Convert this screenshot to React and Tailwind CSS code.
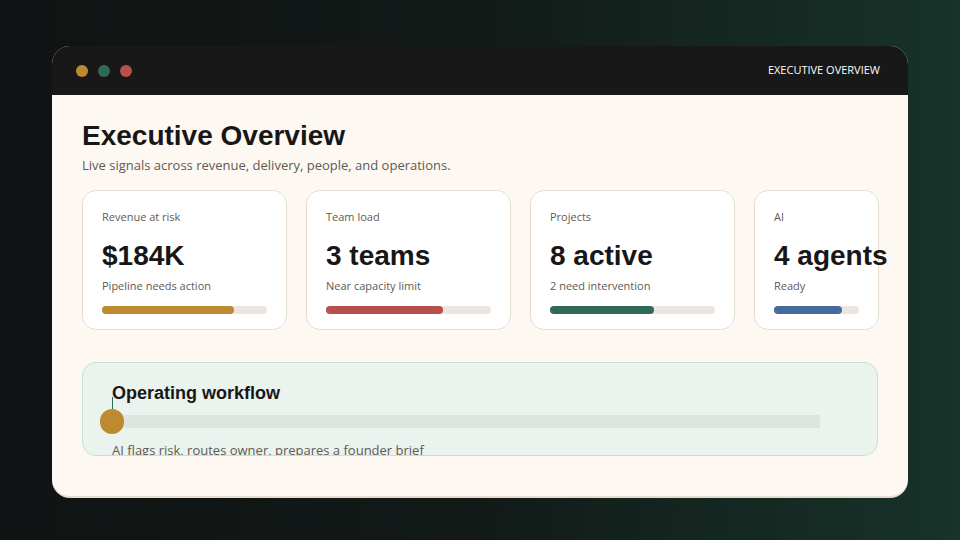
export default function App() {
  const cards = [
    { l: "Revenue at risk", v: "$184K", s: "Pipeline needs action", c: "bg-[#bd8a2f]", w: "w-[205px]", bw: "w-[165px]", f: "w-[132px]" },
    { l: "Team load", v: "3 teams", s: "Near capacity limit", c: "bg-[#b5514a]", w: "w-[205px]", bw: "w-[165px]", f: "w-[117px]" },
    { l: "Projects", v: "8 active", s: "2 need intervention", c: "bg-[#2f6b54]", w: "w-[205px]", bw: "w-[165px]", f: "w-[104px]" },
    { l: "AI", v: "4 agents", s: "Ready", c: "bg-[#456c9c]", w: "w-[125px]", bw: "w-[85px]", f: "w-[68px]" },
  ];
  return (
    <div className="w-[960px] h-[540px] bg-[linear-gradient(90deg,#101313_0%,#121a18_50%,#17332a_100%)] pt-[46px] pl-[52px]" style={{ fontFamily: '"Open Sans", sans-serif' }}>
      <div className="w-[856px] h-[452px] rounded-[18px] overflow-hidden bg-[#fdf8f2] border-b-2 border-[#e6ddd0] flex flex-col">
        <div className="h-[49px] bg-[#181818] flex items-center px-[24px] shrink-0">
          <div className="flex gap-[10px]">
            <span className="w-[12px] h-[12px] rounded-full bg-[#bd8a2f]" />
            <span className="w-[12px] h-[12px] rounded-full bg-[#2f6b54]" />
            <span className="w-[12px] h-[12px] rounded-full bg-[#b5514a]" />
          </div>
          <span className="ml-auto mr-[4px] text-[11px] text-white">EXECUTIVE OVERVIEW</span>
        </div>
        <div className="px-[30px] pt-[24px]">
          <h1 className="text-[28px] font-bold text-[#171717] leading-[34px]" style={{ fontFamily: '"Liberation Sans", Arial, sans-serif' }}>Executive Overview</h1>
          <p className="text-[13px] text-[#5e5a55] leading-[18px] mt-[3px]">Live signals across revenue, delivery, people, and operations.</p>
          <div className="flex gap-[19px] mt-[16px]">
            {cards.map((c) => (
              <div key={c.l} className={`${c.w} h-[140px] shrink-0 bg-white border border-[#e6ddd0] rounded-[14px] px-[19px] pt-[18px]`}>
                <div className="text-[11px] text-[#5e5a55] leading-[16px]">{c.l}</div>
                <div className="text-[28px] font-bold text-[#171717] leading-[32px] mt-[15px] whitespace-nowrap" style={{ fontFamily: '"Liberation Sans", Arial, sans-serif' }}>{c.v}</div>
                <div className="text-[11px] text-[#5e5a55] leading-[16px] mt-[6px]">{c.s}</div>
                <div className={`${c.bw} h-[8px] rounded-full bg-[#ebe7e0] mt-[12px]`}>
                  <div className={`${c.f} h-[8px] rounded-full ${c.c}`} />
                </div>
              </div>
            ))}
          </div>
          <div className="mt-[32px] h-[94px] bg-[#eaf3ee] border border-[#c7e0d2] rounded-[14px] px-[29px] pt-[18px] overflow-hidden relative">
            <div className="text-[18px] font-bold text-[#171717] leading-[24px]" style={{ fontFamily: '"Liberation Sans", Arial, sans-serif' }}>Operating workflow</div>
            <div className="relative h-[24px] mt-[4px]">
              <div className="absolute left-0 top-[6px] w-[708px] h-[13px] bg-[#dce6de]" />
              <div className="absolute left-0 top-[-12px] w-px h-[12px] bg-[#2f6b54]" />
              <div className="absolute left-[-12px] top-0 w-[24px] h-[25px] rounded-full bg-[#bd8a2f]" />
            </div>
            <div className="text-[13px] text-[#5e5a55] leading-[18px] mt-[8px]">AI flags risk, routes owner, prepares a founder brief</div>
          </div>
        </div>
      </div>
    </div>
  );
}
